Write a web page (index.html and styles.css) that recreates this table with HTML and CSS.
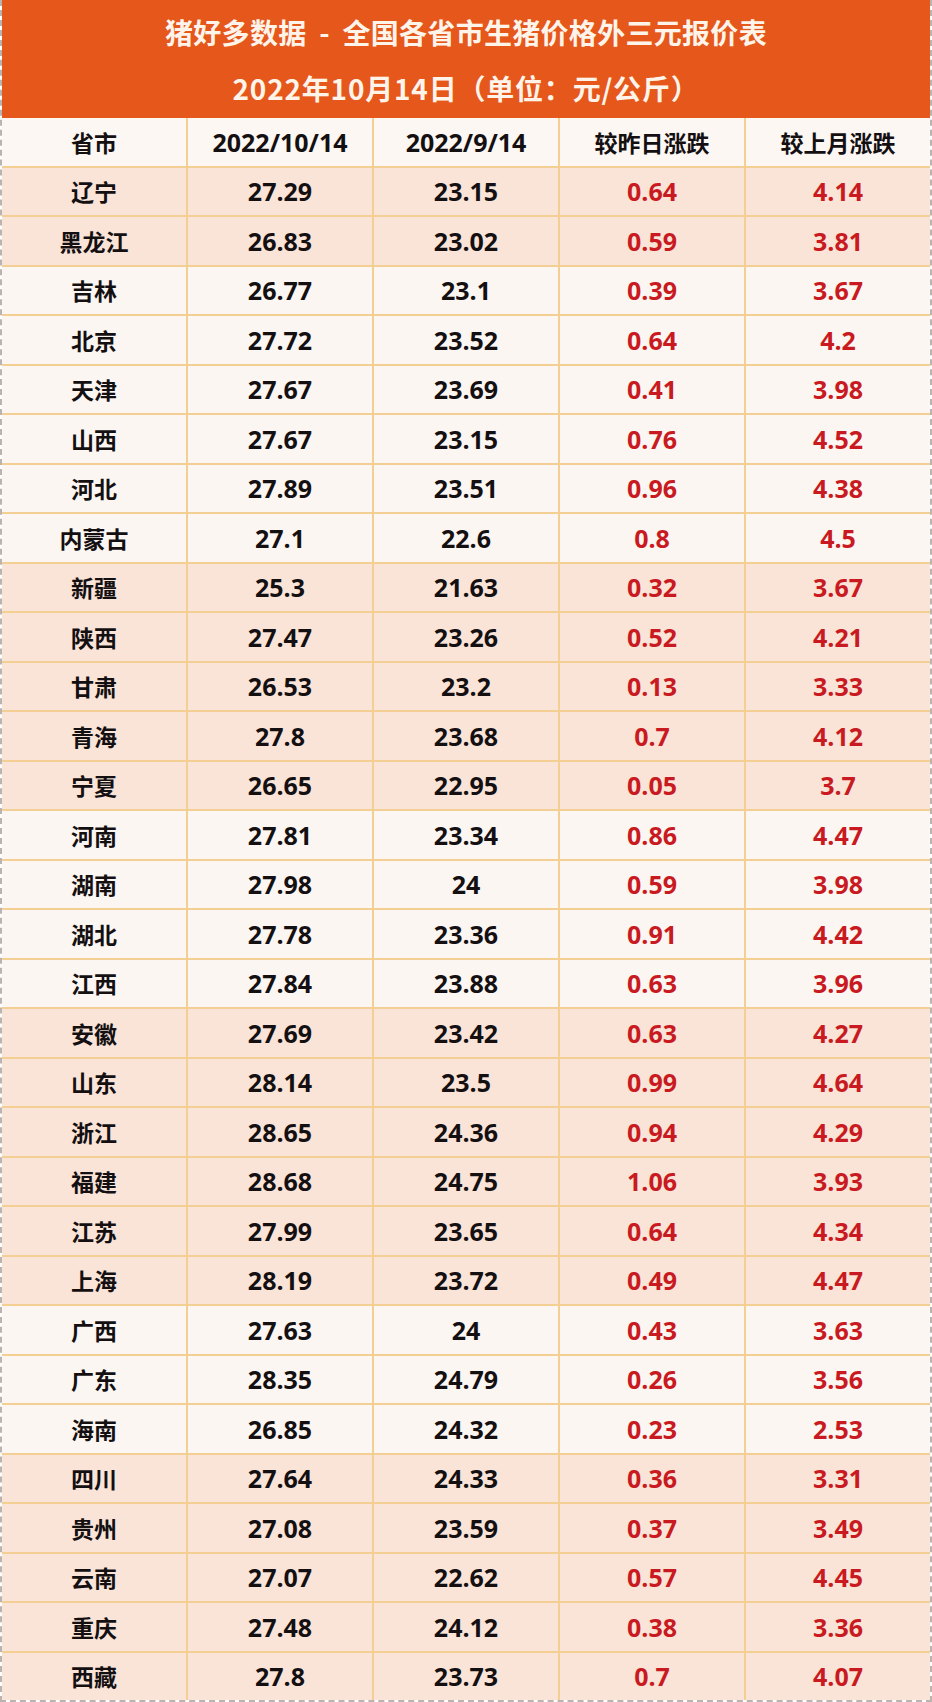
FILE: index.html
```html
<!DOCTYPE html>
<html lang="zh-CN">
<head>
<meta charset="utf-8">
<title>猪好多数据</title>
<link rel="stylesheet" href="styles.css">
</head>
<body>
<div class="sheet">
  <header class="banner">
    <div class="banner-line title">猪好多数据 - 全国各省市生猪价格外三元报价表</div>
    <div class="banner-line subtitle">2022年10月14日（单位：元/公斤）</div>
  </header>
  <div class="table">
    <div class="row head"><div class="cell zh">省市</div><div class="cell">2022/10/14</div><div class="cell">2022/9/14</div><div class="cell zh">较昨日涨跌</div><div class="cell zh">较上月涨跌</div></div>
    <div class="row pink"><div class="cell zh">辽宁</div><div class="cell">27.29</div><div class="cell">23.15</div><div class="cell red">0.64</div><div class="cell red">4.14</div></div>
    <div class="row pink"><div class="cell zh">黑龙江</div><div class="cell">26.83</div><div class="cell">23.02</div><div class="cell red">0.59</div><div class="cell red">3.81</div></div>
    <div class="row white"><div class="cell zh">吉林</div><div class="cell">26.77</div><div class="cell">23.1</div><div class="cell red">0.39</div><div class="cell red">3.67</div></div>
    <div class="row white"><div class="cell zh">北京</div><div class="cell">27.72</div><div class="cell">23.52</div><div class="cell red">0.64</div><div class="cell red">4.2</div></div>
    <div class="row white"><div class="cell zh">天津</div><div class="cell">27.67</div><div class="cell">23.69</div><div class="cell red">0.41</div><div class="cell red">3.98</div></div>
    <div class="row white"><div class="cell zh">山西</div><div class="cell">27.67</div><div class="cell">23.15</div><div class="cell red">0.76</div><div class="cell red">4.52</div></div>
    <div class="row white"><div class="cell zh">河北</div><div class="cell">27.89</div><div class="cell">23.51</div><div class="cell red">0.96</div><div class="cell red">4.38</div></div>
    <div class="row white"><div class="cell zh">内蒙古</div><div class="cell">27.1</div><div class="cell">22.6</div><div class="cell red">0.8</div><div class="cell red">4.5</div></div>
    <div class="row pink"><div class="cell zh">新疆</div><div class="cell">25.3</div><div class="cell">21.63</div><div class="cell red">0.32</div><div class="cell red">3.67</div></div>
    <div class="row pink"><div class="cell zh">陕西</div><div class="cell">27.47</div><div class="cell">23.26</div><div class="cell red">0.52</div><div class="cell red">4.21</div></div>
    <div class="row pink"><div class="cell zh">甘肃</div><div class="cell">26.53</div><div class="cell">23.2</div><div class="cell red">0.13</div><div class="cell red">3.33</div></div>
    <div class="row pink"><div class="cell zh">青海</div><div class="cell">27.8</div><div class="cell">23.68</div><div class="cell red">0.7</div><div class="cell red">4.12</div></div>
    <div class="row pink"><div class="cell zh">宁夏</div><div class="cell">26.65</div><div class="cell">22.95</div><div class="cell red">0.05</div><div class="cell red">3.7</div></div>
    <div class="row white"><div class="cell zh">河南</div><div class="cell">27.81</div><div class="cell">23.34</div><div class="cell red">0.86</div><div class="cell red">4.47</div></div>
    <div class="row white"><div class="cell zh">湖南</div><div class="cell">27.98</div><div class="cell">24</div><div class="cell red">0.59</div><div class="cell red">3.98</div></div>
    <div class="row white"><div class="cell zh">湖北</div><div class="cell">27.78</div><div class="cell">23.36</div><div class="cell red">0.91</div><div class="cell red">4.42</div></div>
    <div class="row white"><div class="cell zh">江西</div><div class="cell">27.84</div><div class="cell">23.88</div><div class="cell red">0.63</div><div class="cell red">3.96</div></div>
    <div class="row pink"><div class="cell zh">安徽</div><div class="cell">27.69</div><div class="cell">23.42</div><div class="cell red">0.63</div><div class="cell red">4.27</div></div>
    <div class="row pink"><div class="cell zh">山东</div><div class="cell">28.14</div><div class="cell">23.5</div><div class="cell red">0.99</div><div class="cell red">4.64</div></div>
    <div class="row pink"><div class="cell zh">浙江</div><div class="cell">28.65</div><div class="cell">24.36</div><div class="cell red">0.94</div><div class="cell red">4.29</div></div>
    <div class="row pink"><div class="cell zh">福建</div><div class="cell">28.68</div><div class="cell">24.75</div><div class="cell red">1.06</div><div class="cell red">3.93</div></div>
    <div class="row pink"><div class="cell zh">江苏</div><div class="cell">27.99</div><div class="cell">23.65</div><div class="cell red">0.64</div><div class="cell red">4.34</div></div>
    <div class="row pink"><div class="cell zh">上海</div><div class="cell">28.19</div><div class="cell">23.72</div><div class="cell red">0.49</div><div class="cell red">4.47</div></div>
    <div class="row white"><div class="cell zh">广西</div><div class="cell">27.63</div><div class="cell">24</div><div class="cell red">0.43</div><div class="cell red">3.63</div></div>
    <div class="row white"><div class="cell zh">广东</div><div class="cell">28.35</div><div class="cell">24.79</div><div class="cell red">0.26</div><div class="cell red">3.56</div></div>
    <div class="row white"><div class="cell zh">海南</div><div class="cell">26.85</div><div class="cell">24.32</div><div class="cell red">0.23</div><div class="cell red">2.53</div></div>
    <div class="row pink"><div class="cell zh">四川</div><div class="cell">27.64</div><div class="cell">24.33</div><div class="cell red">0.36</div><div class="cell red">3.31</div></div>
    <div class="row pink"><div class="cell zh">贵州</div><div class="cell">27.08</div><div class="cell">23.59</div><div class="cell red">0.37</div><div class="cell red">3.49</div></div>
    <div class="row pink"><div class="cell zh">云南</div><div class="cell">27.07</div><div class="cell">22.62</div><div class="cell red">0.57</div><div class="cell red">4.45</div></div>
    <div class="row pink"><div class="cell zh">重庆</div><div class="cell">27.48</div><div class="cell">24.12</div><div class="cell red">0.38</div><div class="cell red">3.36</div></div>
    <div class="row pink"><div class="cell zh">西藏</div><div class="cell">27.8</div><div class="cell">23.73</div><div class="cell red">0.7</div><div class="cell red">4.07</div></div>
  </div>
</div>
</body>
</html>
```
FILE: styles.css
```css
html, body {
  margin: 0;
  padding: 0;
  background: #ffffff;
}

.sheet {
  width: 932px;
  height: 1702px;
  box-sizing: border-box;
  border-left: 2px dashed #b9b4b0;
  border-right: 2px dashed #b9b4b0;
  border-bottom: 2px dashed #b9b4b0;
  display: flex;
  flex-direction: column;
}

.banner {
  height: 118px;
  flex: none;
  background: #e5571b;
  color: #fff4ea;
  font-family: "Noto Sans CJK SC", sans-serif;
  font-weight: 700;
  font-size: 28px;
  display: flex;
  flex-direction: column;
  align-items: center;
  justify-content: center;
  gap: 18px;
  line-height: 38px;
  padding-top: 2px;
  box-sizing: border-box;
}

.banner-line {
  white-space: nowrap;
}

.title {
  word-spacing: 6px;
  letter-spacing: 0.3px;
}

.subtitle {
  letter-spacing: 0.8px;
}

.table {
  flex: 1;
  display: flex;
  flex-direction: column;
  gap: 2px;
  background: #f3cf94;
}

.row {
  flex: 1;
  display: grid;
  grid-template-columns: repeat(5, 1fr);
  gap: 2px;
}

.cell {
  display: flex;
  align-items: center;
  justify-content: center;
  font-family: "Open Sans", "Noto Sans CJK SC", sans-serif;
  font-weight: 700;
  font-size: 25px;
  color: #141012;
  white-space: nowrap;
}

.cell.zh {
  font-family: "Noto Sans CJK SC", sans-serif;
  font-size: 23px;
}

.cell.red {
  color: #c81a20;
}

.head .cell {
  background: #fcf7f3;
}

.pink .cell {
  background: #fae4d8;
}

.white .cell {
  background: #fcf6f2;
}
```
